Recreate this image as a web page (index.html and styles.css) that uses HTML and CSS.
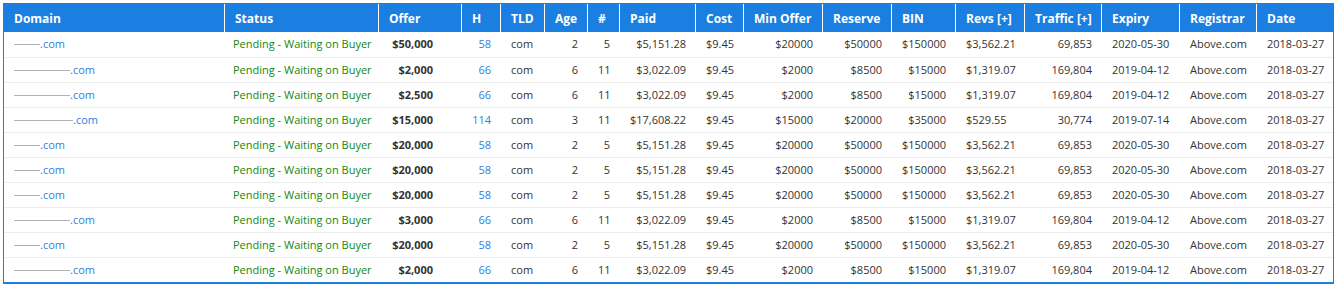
FILE: index.html
```html
<!DOCTYPE html>
<html>
<head>
<meta charset="utf-8">
<link rel="stylesheet" href="styles.css">
</head>
<body>
<div class="wrap">
<table class="grid">
<thead>
<tr>
<th class="c-domain">Domain</th>
<th class="c-status">Status</th>
<th class="c-offer">Offer</th>
<th class="c-h">H</th>
<th class="c-tld">TLD</th>
<th class="c-age">Age</th>
<th class="c-num">#</th>
<th class="c-paid">Paid</th>
<th class="c-cost">Cost</th>
<th class="c-min">Min Offer</th>
<th class="c-res">Reserve</th>
<th class="c-bin">BIN</th>
<th class="c-revs">Revs [+]</th>
<th class="c-traffic">Traffic [+]</th>
<th class="c-exp">Expiry</th>
<th class="c-reg">Registrar</th>
<th class="c-date">Date</th>
</tr>
</thead>
<tbody>
<tr><td><a class="dom"><span class="blank short"></span>.com</a></td><td class="st">Pending - Waiting on Buyer</td><td class="offer">$50,000</td><td class="r"><a class="lnk">58</a></td><td>com</td><td class="r">2</td><td class="r">5</td><td class="r">$5,151.28</td><td>$9.45</td><td class="r">$20000</td><td class="r">$50000</td><td class="r">$150000</td><td>$3,562.21</td><td class="r">69,853</td><td>2020-05-30</td><td>Above.com</td><td>2018-03-27</td></tr>
<tr><td><a class="dom"><span class="blank long"></span>.com</a></td><td class="st">Pending - Waiting on Buyer</td><td class="offer">$2,000</td><td class="r"><a class="lnk">66</a></td><td>com</td><td class="r">6</td><td class="r">11</td><td class="r">$3,022.09</td><td>$9.45</td><td class="r">$2000</td><td class="r">$8500</td><td class="r">$15000</td><td>$1,319.07</td><td class="r">169,804</td><td>2019-04-12</td><td>Above.com</td><td>2018-03-27</td></tr>
<tr><td><a class="dom"><span class="blank long"></span>.com</a></td><td class="st">Pending - Waiting on Buyer</td><td class="offer">$2,500</td><td class="r"><a class="lnk">66</a></td><td>com</td><td class="r">6</td><td class="r">11</td><td class="r">$3,022.09</td><td>$9.45</td><td class="r">$2000</td><td class="r">$8500</td><td class="r">$15000</td><td>$1,319.07</td><td class="r">169,804</td><td>2019-04-12</td><td>Above.com</td><td>2018-03-27</td></tr>
<tr><td><a class="dom"><span class="blank longer"></span>.com</a></td><td class="st">Pending - Waiting on Buyer</td><td class="offer">$15,000</td><td class="r"><a class="lnk">114</a></td><td>com</td><td class="r">3</td><td class="r">11</td><td class="r">$17,608.22</td><td>$9.45</td><td class="r">$15000</td><td class="r">$20000</td><td class="r">$35000</td><td>$529.55</td><td class="r">30,774</td><td>2019-07-14</td><td>Above.com</td><td>2018-03-27</td></tr>
<tr><td><a class="dom"><span class="blank short"></span>.com</a></td><td class="st">Pending - Waiting on Buyer</td><td class="offer">$20,000</td><td class="r"><a class="lnk">58</a></td><td>com</td><td class="r">2</td><td class="r">5</td><td class="r">$5,151.28</td><td>$9.45</td><td class="r">$20000</td><td class="r">$50000</td><td class="r">$150000</td><td>$3,562.21</td><td class="r">69,853</td><td>2020-05-30</td><td>Above.com</td><td>2018-03-27</td></tr>
<tr><td><a class="dom"><span class="blank short"></span>.com</a></td><td class="st">Pending - Waiting on Buyer</td><td class="offer">$20,000</td><td class="r"><a class="lnk">58</a></td><td>com</td><td class="r">2</td><td class="r">5</td><td class="r">$5,151.28</td><td>$9.45</td><td class="r">$20000</td><td class="r">$50000</td><td class="r">$150000</td><td>$3,562.21</td><td class="r">69,853</td><td>2020-05-30</td><td>Above.com</td><td>2018-03-27</td></tr>
<tr><td><a class="dom"><span class="blank short"></span>.com</a></td><td class="st">Pending - Waiting on Buyer</td><td class="offer">$20,000</td><td class="r"><a class="lnk">58</a></td><td>com</td><td class="r">2</td><td class="r">5</td><td class="r">$5,151.28</td><td>$9.45</td><td class="r">$20000</td><td class="r">$50000</td><td class="r">$150000</td><td>$3,562.21</td><td class="r">69,853</td><td>2020-05-30</td><td>Above.com</td><td>2018-03-27</td></tr>
<tr><td><a class="dom"><span class="blank long"></span>.com</a></td><td class="st">Pending - Waiting on Buyer</td><td class="offer">$3,000</td><td class="r"><a class="lnk">66</a></td><td>com</td><td class="r">6</td><td class="r">11</td><td class="r">$3,022.09</td><td>$9.45</td><td class="r">$2000</td><td class="r">$8500</td><td class="r">$15000</td><td>$1,319.07</td><td class="r">169,804</td><td>2019-04-12</td><td>Above.com</td><td>2018-03-27</td></tr>
<tr><td><a class="dom"><span class="blank short"></span>.com</a></td><td class="st">Pending - Waiting on Buyer</td><td class="offer">$20,000</td><td class="r"><a class="lnk">58</a></td><td>com</td><td class="r">2</td><td class="r">5</td><td class="r">$5,151.28</td><td>$9.45</td><td class="r">$20000</td><td class="r">$50000</td><td class="r">$150000</td><td>$3,562.21</td><td class="r">69,853</td><td>2020-05-30</td><td>Above.com</td><td>2018-03-27</td></tr>
<tr><td><a class="dom"><span class="blank long"></span>.com</a></td><td class="st">Pending - Waiting on Buyer</td><td class="offer">$2,000</td><td class="r"><a class="lnk">66</a></td><td>com</td><td class="r">6</td><td class="r">11</td><td class="r">$3,022.09</td><td>$9.45</td><td class="r">$2000</td><td class="r">$8500</td><td class="r">$15000</td><td>$1,319.07</td><td class="r">169,804</td><td>2019-04-12</td><td>Above.com</td><td>2018-03-27</td></tr>
</tbody>
</table>
</div>
</body>
</html>
```

FILE: styles.css
```css
* { box-sizing: border-box; }
html, body { margin: 0; padding: 0; background: #fff; }
body {
  font-family: "Open Sans", "DejaVu Sans", sans-serif;
  color: #333;
}
.wrap {
  margin: 3px 0 0 3px;
  width: 1331px;
  border: 1px solid #1a7fe0;
  border-bottom-width: 2px;
}
.grid {
  width: 1329px;
  table-layout: fixed;
  border-collapse: separate;
  border-spacing: 0;
}
.grid th {
  height: 28px;
  background: #1a7fe0;
  color: #fff;
  font-size: 12px;
  font-weight: 700;
  text-align: left;
  padding: 0 0 0 10px;
  border-left: 1px solid #fff;
  white-space: nowrap;
  overflow: hidden;
}
.grid th:first-child { border-left: none; }
.grid td {
  height: 25px;
  font-size: 11px;
  padding: 0 10px 2px;
  border-top: 1px solid #ececec;
  border-left: 1px solid transparent;
  white-space: nowrap;
  overflow: hidden;
  vertical-align: middle;
}
.grid td:first-child { border-left: none; }
.grid tbody tr:first-child td { border-top: none; }
.grid td.r { text-align: right; padding-right: 9px; }
.grid td.offer { text-align: right; font-weight: 700; padding-right: 28px; }
.grid td.st { color: #118811; padding-left: 8px; }
.c-domain { width: 220px; }
.c-status { width: 154px; }
.c-offer { width: 83px; }
.c-h { width: 39px; }
.c-tld { width: 44px; }
.c-age { width: 43px; }
.c-num { width: 32px; }
.c-paid { width: 76px; }
.c-cost { width: 48px; }
.c-min { width: 79px; }
.c-res { width: 69px; }
.c-bin { width: 64px; }
.c-revs { width: 69px; }
.c-traffic { width: 77px; }
.c-exp { width: 78px; }
.c-reg { width: 77px; }
.c-date { width: 77px; }
.dom, .lnk { color: #2f80e0; text-decoration: none; }
.blank {
  display: inline-block;
  height: 1px;
  background: #b0b0b0;
  vertical-align: 3px;
}
.blank.short { width: 26px; }
.blank.long { width: 56px; }
.blank.longer { width: 59px; }
```
